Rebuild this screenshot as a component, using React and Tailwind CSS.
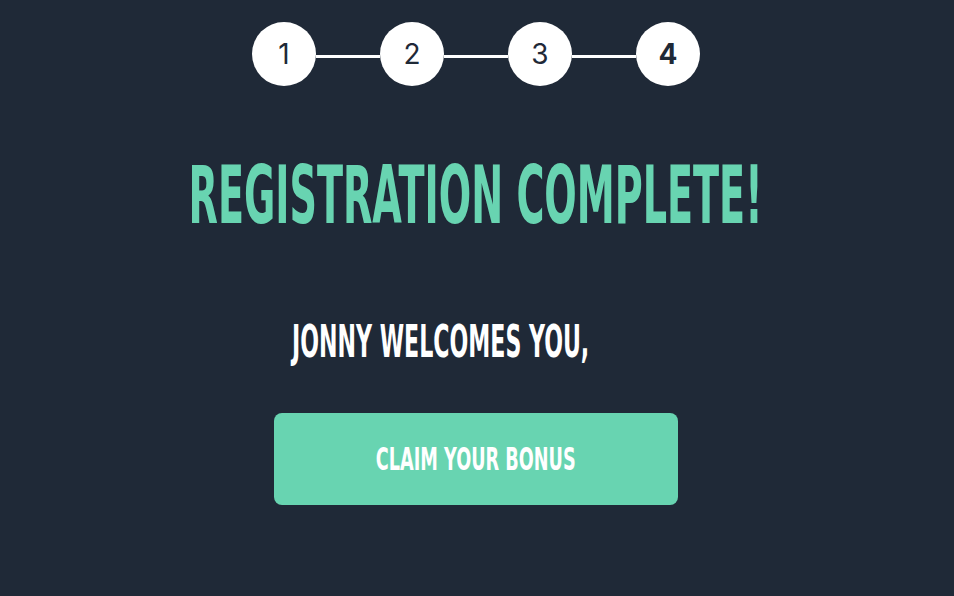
import React from "react";

const steps = [1, 2, 3, 4];

function Stepper({ current }) {
  return (
    <div className="flex flex-row items-center">
      {steps.map((n, i) => (
        <React.Fragment key={n}>
          {i > 0 && <div className="w-16 h-[3px] mt-[4px] bg-white" />}
          <div
            className={
              "w-16 h-16 rounded-full bg-white flex items-center justify-center text-[28px] text-[#1f2937] font-['Inter',sans-serif] " +
              (n === current ? "font-bold" : "font-normal")
            }
          >
            {n}
          </div>
        </React.Fragment>
      ))}
    </div>
  );
}

export default function App() {
  return (
    <div className="h-screen w-full overflow-hidden bg-[#1f2937] flex flex-col items-center pt-[22px] pr-[2px] font-['DejaVu_Sans_Condensed','DejaVu_Sans',sans-serif] font-bold">
      <Stepper current={4} />

      <h1 className="mt-[70px] text-[80px] leading-none text-[#68d4b1] whitespace-nowrap">
        <span className="inline-block scale-x-[0.53]">REGISTRATION COMPLETE!</span>
      </h1>

      <div className="w-[404px] mt-[83px] pl-[18px]">
        <p className="text-[45px] leading-none text-white whitespace-nowrap">
          <span className="inline-block origin-left scale-x-[0.546]">JONNY WELCOMES YOU,</span>
        </p>
      </div>

      <button className="mt-[49px] w-[404px] h-[92px] rounded-lg bg-[#68d4b1] text-white text-[32px] leading-none flex items-center justify-center whitespace-nowrap">
        <span className="inline-block scale-x-[0.614]">CLAIM YOUR BONUS</span>
      </button>
    </div>
  );
}
